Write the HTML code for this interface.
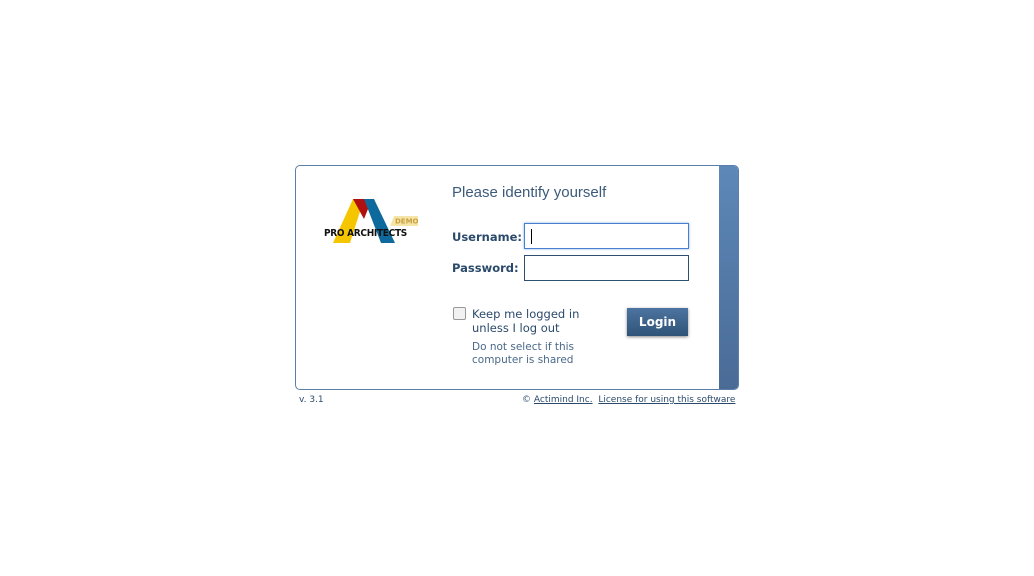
<!DOCTYPE html>
<html><head><style>
body{margin:0;width:1034px;height:576px;background:#fff;font-family:"Liberation Sans",sans-serif;position:relative;overflow:hidden}
.box{position:absolute;left:295px;top:165px;width:442px;height:223px;border:1px solid #5b7fa8;border-radius:5px;overflow:hidden;background:#fff}
.bar{position:absolute;right:0;top:0;width:19px;height:100%;background:linear-gradient(#5d88b8,#4a6b96)}
.t{position:absolute;color:#2b4a6b}
input{position:absolute;box-sizing:border-box;height:26px;width:165px;border:1px solid #2d5070;background:#fff;margin:0}
.btn{position:absolute;left:627px;top:308px;width:61px;height:28px;background:linear-gradient(#4d74a0,#2f5478);color:#fff;font-size:12px;text-align:center;line-height:28px;box-shadow:0 1px 3px #888;font-weight:bold}
a{color:#2b4a6b}
.dv{font-family:"DejaVu Sans",sans-serif}
</style></head><body>
<div class="box"><div class="bar"></div></div>
<svg style="position:absolute;left:320px;top:195px" width="100" height="52">
<polygon points="13,48 33,4 44,4 30,48" fill="#f5c600"/>
<polygon points="33,4 52,4 44,24" fill="#b01010"/>
<polygon points="44,4 54,4 75,48 61,48" fill="#0e6a9c"/>
<polygon points="74,21 98,21 98,31 70,31" fill="#f5e6a8"/>
<text x="75" y="28.5" font-size="7" font-weight="bold" fill="#c9a040" font-family="DejaVu Sans">DEMO</text>
<text x="4" y="41" font-size="10" font-weight="bold" fill="#111" font-family="DejaVu Sans Condensed, DejaVu Sans" letter-spacing="-0.3">PRO ARCHITECTS</text>
</svg>
<div class="t" style="left:452px;top:184px;font-size:15px;color:#3c5a7a">Please identify yourself</div>
<div class="t dv" style="left:452px;top:230px;font-size:11.5px;font-weight:bold">Username:</div>
<div class="t dv" style="left:452px;top:261px;font-size:11.5px;font-weight:bold">Password:</div>
<input style="left:524px;top:223px;border-color:#4a7fd0;box-shadow:0 0 2px #7aa6e6">
<div style="position:absolute;left:531px;top:229px;width:1px;height:15px;background:#000"></div>
<input style="left:524px;top:255px">
<div style="position:absolute;left:453px;top:307px;width:11px;height:11px;border:1px solid #999;border-radius:2px;background:#f2f2f2"></div>
<div class="t dv" style="left:472px;top:307px;font-size:11.5px;line-height:14px">Keep me logged in<br>unless I log out</div>
<div class="t dv" style="left:472px;top:341px;font-size:10.5px;line-height:13px;color:#4a6888">Do not select if this<br>computer is shared</div>
<div class="btn dv">Login</div>
<div class="t dv" style="left:299px;top:395px;font-size:9px">v. 3.1</div>
<div class="t dv" style="left:522px;top:395px;font-size:9px">© <a href="#">Actimind Inc.</a>&nbsp;&nbsp;<a href="#">License for using this software</a></div>
</body></html>
